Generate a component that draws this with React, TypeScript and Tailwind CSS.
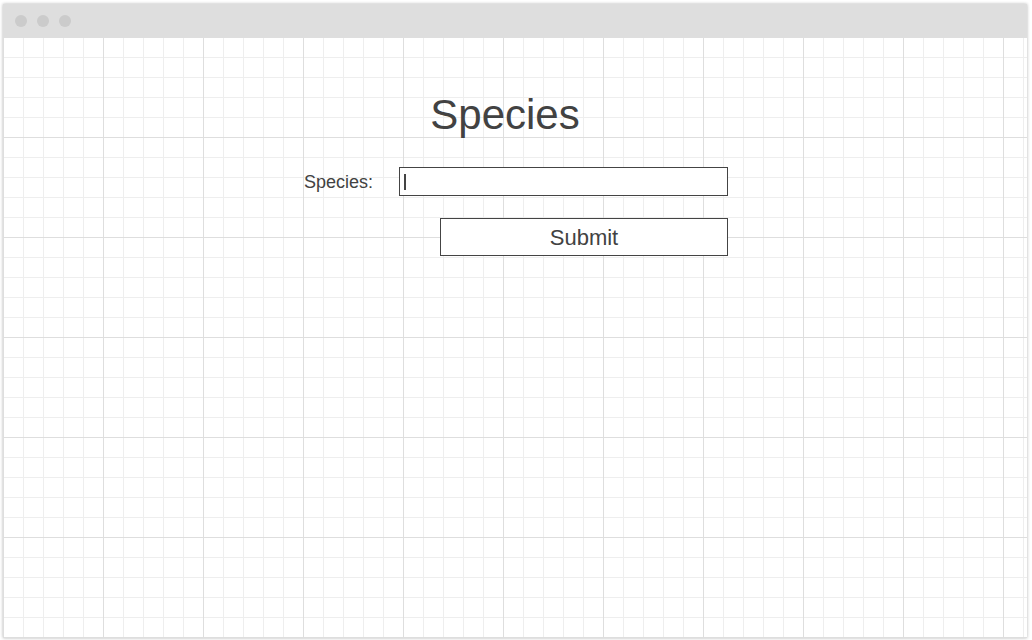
const Dot = () => <span className="h-[12px] w-[12px] rounded-full bg-[#cbcbcb]" />

const App: React.FC = () => {
  return (
    <div className="h-[640px] w-[1032px] bg-white pl-[3px] pt-[4px] font-['Liberation_Sans',Arial,sans-serif] text-[#424242]">
      <div className="flex h-[634px] w-[1024px] flex-col shadow-[0_0_3px_rgba(0,0,0,0.3)]">
        <div className="flex h-[33px] items-center gap-[10px] bg-[#dedede] pl-[12px]">
          <Dot />
          <Dot />
          <Dot />
        </div>
        <div className="flex-1 bg-white bg-[linear-gradient(to_right,#dedede_1px,transparent_1px),linear-gradient(to_bottom,#dedede_1px,transparent_1px),linear-gradient(to_right,#eeeeee_1px,transparent_1px),linear-gradient(to_bottom,#eeeeee_1px,transparent_1px)] bg-[size:100px_100px,100px_100px,20px_20px,20px_20px] pt-[57px]">
          <h1 className="pr-[20px] text-center text-[42px] leading-none">Species</h1>
          <div className="ml-[301px] mt-[31px] flex w-[424px] flex-col items-end">
            <div className="flex w-full items-center">
              <label className="w-[95px] text-[18px] leading-[18px]">Species:</label>
              <div className="flex h-[29px] flex-1 items-center border border-[#444] bg-white pl-[4px]">
                <span className="h-[16px] w-[2px] bg-[#444]" />
              </div>
            </div>
            <button className="mt-[22px] h-[38px] w-[288px] border border-[#444] bg-white pt-[2px] text-[22px] leading-none text-[#424242]">
              Submit
            </button>
          </div>
        </div>
      </div>
    </div>
  )
}

export default App
